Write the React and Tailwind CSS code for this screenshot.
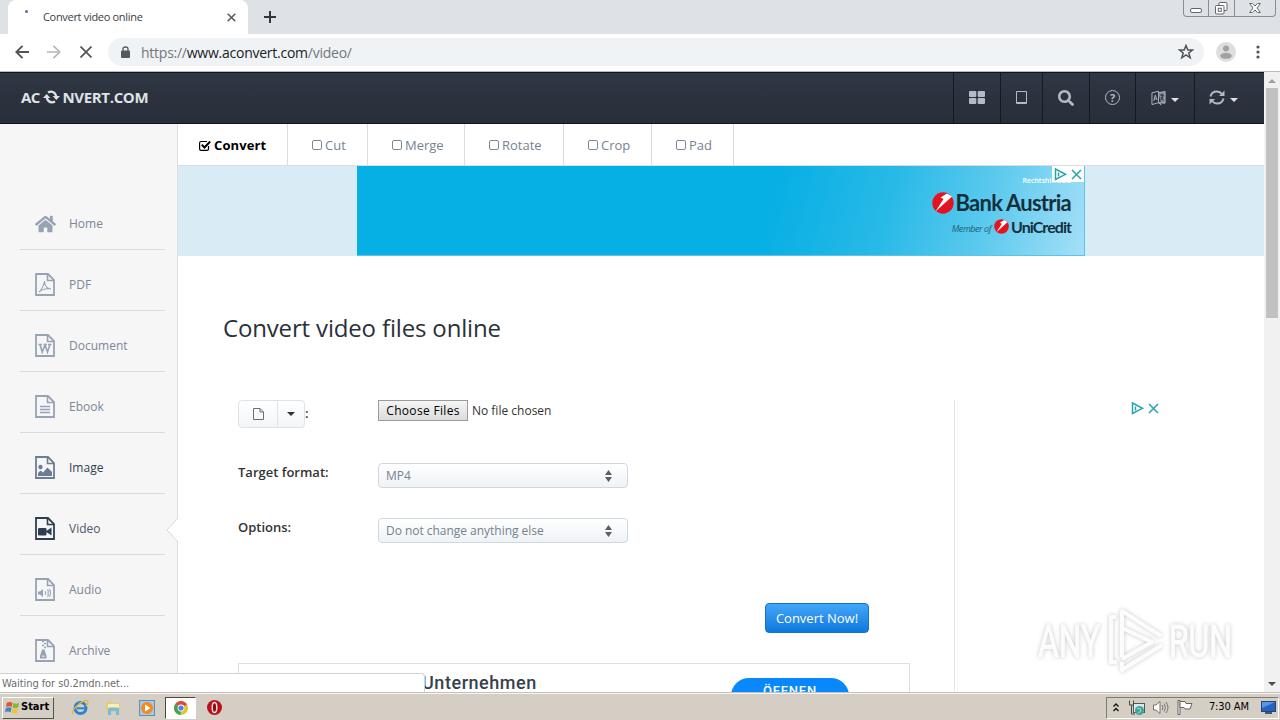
import React from "react";
import { FaHome, FaSearch } from "react-icons/fa";

const menu = [
  { label: "Home", type: "home" },
  { label: "PDF", type: "pdf" },
  { label: "Document", type: "doc" },
  { label: "Ebook", type: "ebook" },
  { label: "Image", type: "image", color: "text-[#6b7d96]", text: "text-[#333f50]" },
  { label: "Video", type: "video", color: "text-[#2f3d52]", text: "text-[#4c5a6b]" },
  { label: "Audio", type: "audio" },
  { label: "Archive", type: "archive" },
];

const tabs = [
  { label: "Cut", width: "w-20" },
  { label: "Merge", width: "w-[97px]" },
  { label: "Rotate", width: "w-[99px]" },
  { label: "Crop", width: "w-[88px]" },
  { label: "Pad", width: "w-[82px]" },
];

const FileIcon = ({ type }) => (
  <svg width="20" height="23" viewBox="0 0 20 23" fill="none" stroke="currentColor" strokeWidth="1.8">
    <path d="M1 1H13L19 7V22H1Z" />
    <path d="M12.5 1V7.5H19" strokeWidth="1.6" />
    {type === "pdf" && (
      <path d="M4 19C6 18 9 12 9.500 8C9 13 13 16 16 16C13 15 7 16 4 19Z" strokeWidth="1.1" />
    )}
    {type === "doc" && (
      <path d="M3.500 10.500H7M8.500 10.500H12M13 10.500H16.500M5 10.500L7.200 18L10 11L12.500 18L15 10.500" strokeWidth="1.600" />
    )}
    {type === "ebook" && <path d="M5 11.500H15M5 14.500H15M5 17.500H15" strokeWidth="1.400" />}
    {type === "image" && (
      <g fill="currentColor" stroke="none">
        <circle cx="5.500" cy="11" r="2.200" />
        <path d="M3 20V17L5.500 14.500L8 16.500L12.500 11.500L17 16V20Z" />
      </g>
    )}
    {type === "video" && (
      <g fill="currentColor" stroke="none">
        <rect x="3" y="11" width="8.500" height="7.500" rx="1.2" />
        <path d="M10.500 14.500L16.500 10.500V18.500Z" />
      </g>
    )}
    {type === "audio" && (
      <g>
        <path d="M3 13.500H5L8 11V19L5 16.500H3Z" fill="currentColor" stroke="none" />
        <path d="M10 13Q11.500 15 10 17M12.500 11.500Q14 13 13 15Q14 17 12.500 18.500M14.500 11Q16.500 15 14.500 19" strokeWidth="1.100" />
      </g>
    )}
    {type === "archive" && (
      <g>
        <path d="M7 2.500H9M9 4.500H11M7 6.500H9M9 8.500H11" strokeWidth="1.500" />
        <path d="M7 10.500H9.500L11.500 17V19.500H5V17Z" fill="currentColor" stroke="none" />
        <path d="M7 17.200H9.500" stroke="#f6f6f6" strokeWidth="1" />
      </g>
    )}
  </svg>
);

const Caret = ({ className }) => (
  <svg className={className} width="8" height="4" viewBox="0 0 8 4" fill="currentColor">
    <path d="M0 0H8L4 4Z" />
  </svg>
);

const Swoosh = ({ size }) => (
  <svg width={size} height={size} viewBox="0 0 22 22" className="shrink-0">
    <circle cx="11" cy="11" r="10.700" fill="#e4131f" />
    <path d="M3.500 19.500L11.500 7L8.500 5.500L15 1.500L20 4.500Z" fill="#fff" />
  </svg>
);

const AdChoices = () => (
  <svg width="30" height="14" viewBox="0 0 30 14" fill="none" stroke="#27a3b0" strokeWidth="1.500">
    <path d="M2.500 2V12.500L12.500 7.300Z" />
    <path d="M5.500 5.500V9.500" />
    <path d="M19 3L28 12M28 3L19 12" />
  </svg>
);

const BrowserChrome = () => (
  <div className="shrink-0 h-[72px] bg-white">
    <div className="h-[34px] bg-[#dee1e6] flex items-start pl-2">
      <div className="w-60 h-full bg-white rounded-t-lg flex items-center pl-[17px] pr-3">
        <span className="w-[3px] h-[3px] rounded-full bg-[#5470a8] mb-[12px]" />
        <span className="ml-[15px] grow text-[11px] text-[#3a3d41] tracking-[-0.310px]">Convert video online</span>
        <svg width="9" height="9" viewBox="0 0 9 9" stroke="#55585c" strokeWidth="1.500">
          <path d="M0.700 0.700L8.300 8.300M8.300 0.700L0.700 8.300" />
        </svg>
      </div>
      <svg className="mt-[11px] ml-4" width="12" height="12" viewBox="0 0 12 12" stroke="#33363a" strokeWidth="2">
        <path d="M6 0V12M0 6H12" />
      </svg>
      <div className="ml-auto mr-[4px] h-[17px] w-[93px] flex border border-t-0 border-[#898d96] rounded-b-[4px] text-[#6b6f78]">
        <div className="w-[25px] border-r border-[#898d96] flex items-end justify-center pb-[3px]">
          <span className="w-[12px] h-[5px] border border-[#63666e] rounded-xs bg-white" />
        </div>
        <div className="w-[26px] border-r border-[#898d96] flex justify-center pt-[2px]">
          <svg width="13" height="13" viewBox="0 0 13 13" fill="#fff" stroke="#63666e">
            <rect x="4" y="0.500" width="8" height="8" rx="1" />
            <rect x="0.500" y="3.500" width="8.500" height="8.500" rx="1" />
            <rect x="3.300" y="6.300" width="3" height="3" />
          </svg>
        </div>
        <div className="grow flex justify-center pt-[3px]">
          <svg width="12" height="10" viewBox="0 0 12 10" fill="#fff" stroke="#63666e">
            <path d="M0.700 0.500H3.500L6 3L8.500 0.500H11.300L8 5L11.300 9.500H8.500L6 7L3.500 9.500H0.700L4 5Z" />
          </svg>
        </div>
      </div>
    </div>
    <div className="h-[37px] flex items-center pl-[15px] pr-5 pb-px">
      <svg width="14" height="14" viewBox="0 0 14 14" fill="none" stroke="#505357" strokeWidth="1.900">
        <path d="M14 7H1.500M7.500 0.800L1.300 7L7.500 13.200" />
      </svg>
      <svg className="ml-[18px]" width="14" height="14" viewBox="0 0 14 14" fill="none" stroke="#b5b7ba" strokeWidth="1.700">
        <path d="M0 7H12.500M6.500 0.800L12.700 7L6.500 13.200" />
      </svg>
      <svg className="ml-[19px]" width="12" height="12" viewBox="0 0 12 12" stroke="#505357" strokeWidth="1.700">
        <path d="M0.500 0.500L11.500 11.500M11.500 0.500L0.500 11.500" />
      </svg>
      <div className="ml-4 h-7 grow bg-[#f0f3f5] rounded-full flex items-center pl-[13px] pr-[10px]">
        <svg width="9" height="12" viewBox="0 0 9 12">
          <rect x="0" y="4.500" width="9" height="7.500" rx="1" fill="#55585c" />
          <path d="M2 5V3Q2 1 4.500 1Q7 1 7 3V5" fill="none" stroke="#55585c" strokeWidth="1.300" />
        </svg>
        <span className="ml-[11px] grow text-[14px] text-[#74777b] tracking-[-0.250px]">
          https://<span className="text-[#202124]">www.aconvert.com</span>/video/
        </span>
        <svg width="16" height="16" viewBox="0 0 16 16" fill="none" stroke="#505357" strokeWidth="1.500">
          <path d="M8 1.500L9.800 6H14.500L10.800 9L12.200 13.800L8 11L3.800 13.800L5.200 9L1.500 6H6.200Z" />
        </svg>
      </div>
      <svg className="ml-3" width="20" height="20" viewBox="0 0 20 20">
        <circle cx="10" cy="10" r="10" fill="#dedede" />
        <circle cx="10" cy="6.500" r="3" fill="#a2a2a2" />
        <ellipse cx="10" cy="13.800" rx="5.800" ry="3" fill="#a2a2a2" />
      </svg>
      <svg className="ml-[20px]" width="4" height="14" viewBox="0 0 4 14" fill="#505357">
        <circle cx="2" cy="2" r="1.600" />
        <circle cx="2" cy="7" r="1.600" />
        <circle cx="2" cy="12" r="1.600" />
      </svg>
    </div>
    <div className="h-px bg-[#b9bbbd]" />
  </div>
);

const Header = () => (
  <header className="h-[52px] shrink-0 bg-linear-to-b from-[#2f3744] to-[#282e39] border-y border-[#10151d] flex items-stretch text-[#b3bac5]">
    <div className="grow flex items-center pl-[21px] pb-[2px] text-[15px] font-bold text-[#dfe2e6]">
      <span className="tracking-[-0.700px]">AC</span>
      <svg className="mx-[3px]" width="17" height="14" viewBox="0 0 17 14" fill="none" stroke="currentColor" strokeWidth="2.300">
        <path d="M5 2.500Q8.500 0.500 11.500 3Q13 4.500 13.300 7M12 11.500Q8.500 13.500 5.500 11Q4 9.500 3.700 7" />
        <path d="M9.700 6H17L13.300 10ZM7.300 8H0L3.700 4Z" fill="currentColor" stroke="none" />
      </svg>
      <span className="tracking-[-0.350px]">NVERT.COM</span>
    </div>
    <div className="w-[47px] border-l border-[#141a24] flex items-center justify-center pb-[2px]">
      <svg width="16" height="13" viewBox="0 0 16 13" fill="currentColor">
        <rect width="7.300" height="6" rx="1" />
        <rect x="8.700" width="7.300" height="6" rx="1" />
        <rect y="7" width="7.300" height="6" rx="1" />
        <rect x="8.700" y="7" width="7.300" height="6" rx="1" />
      </svg>
    </div>
    <div className="w-[42px] border-l border-[#141a24] flex items-center justify-center pb-[2px]">
      <span className="w-[11px] h-[13px] border border-b-2 border-[#b3bac5] rounded-[1px] -ml-px" />
    </div>
    <div className="w-[47px] border-l border-[#141a24] flex items-center justify-center pb-[1px]">
      <FaSearch className="text-[16px]" />
    </div>
    <div className="w-[46px] border-l border-[#141a24] flex items-center justify-center pb-[2px]">
      <span className="w-[15px] h-[15px] rounded-full border border-[#b3bac5] flex items-center justify-center text-[11px] font-bold leading-none">
        ?
      </span>
    </div>
    <div className="w-[59px] border-l border-[#141a24] flex items-center pl-[15px] pb-[1px]">
      <svg width="15" height="16" viewBox="0 0 16 16" fill="none" stroke="currentColor">
        <path d="M1 2.500L8 0.800V13L1 15Z" />
        <path d="M8 2.500L15 1V13.500L8 13L11 15.500" fill="#7f8896" />
        <path d="M3 11L4.500 5L6.500 10M3.500 9H6" />
        <path d="M10 5H13.500M11.500 3.500V5M13 5Q12 9 9.800 10.500M10.500 7L13.500 10.500" stroke="#252b35" />
      </svg>
      <Caret className="ml-[5px] mt-1 text-[#dfe2e6]" />
    </div>
    <div className="w-[70px] border-l border-[#141a24] flex items-center pl-[14px] pb-[1px]">
      <svg width="16" height="15" viewBox="0 0 16 15" fill="none" stroke="currentColor" strokeWidth="1.900">
        <path d="M1.500 6.500Q2.500 1.500 8 1.500Q11 1.500 13.500 4.500M14.500 8.500Q13.500 13.500 8 13.500Q5 13.500 2.500 10.500" />
        <path d="M15.500 0.500V6H10ZM0.500 14.500V9H6Z" fill="currentColor" stroke="none" />
      </svg>
      <Caret className="ml-[5px] mt-1 text-[#dfe2e6]" />
    </div>
  </header>
);

const Sidebar = () => (
  <aside className="w-[178px] shrink-0 bg-[#f6f6f6] border-r border-[#dcdee0] pt-[65px] pl-5 pr-3 relative">
    {menu.map((item) => (
      <div key={item.label} className="h-[61px] pt-[9px] border-b border-[#d9dadc] flex items-center">
        <span className={`w-[34px] pl-[15px] shrink-0 ${item.color || "text-[#97a3b4]"}`}>
          {item.type === "home" ? <FaHome className="w-[21px] h-[20px]" /> : <FileIcon type={item.type} />}
        </span>
        <span className={`ml-[15px] text-[12px] ${item.text || "text-[#7c8797]"}`}>{item.label}</span>
      </div>
    ))}
    {/* active item pointer */}
    <svg className="absolute right-[-1px] top-[394px]" width="12" height="24" viewBox="0 0 12 24">
      <path d="M12 0.500L1 12L12 23.500Z" fill="#fff" />
      <path d="M11.500 0.500L1 12L11.500 23.500" fill="none" stroke="#d8dadc" />
    </svg>
  </aside>
);

const Select = ({ value }) => (
  <div className="w-[250px] h-[25px] border border-[#d0d7de] rounded-[4px] bg-linear-to-b from-white to-[#eff3f6] flex items-center pl-[7px] pr-[15px] text-[12px] text-[#76818c]">
    <span className="grow tracking-[-0.030px]">{value}</span>
    <svg width="7" height="12" viewBox="0 0 7 12" fill="#5c5f63">
      <path d="M0 5L3.500 0L7 5ZM0 7L3.500 12L7 7Z" />
    </svg>
  </div>
);

const Banner = () => (
  <div className="h-[90px] shrink-0 bg-[#d9ebf5] pl-[179px]">
    <div className="w-[728px] h-[90px] bg-[linear-gradient(105deg,#06afe4_56%,#28b9e7_72%,#5dcaee_86%,#a5dff7_100%)] border-r border-b border-[#5cc4e4] relative flex flex-col items-end pr-[13px]">
      <span className="mt-[10px] h-[9px] leading-[9px] text-[7px] font-semibold text-white">Rechtshinweis</span>
      <div className="mt-[5px] h-[25px] flex items-center">
        <Swoosh size={22} />
        <span className="ml-[2px] text-[22px] leading-[25px] font-bold text-[#14303d] tracking-[-0.750px] font-['Lato',sans-serif]">
          Bank Austria
        </span>
      </div>
      <div className="mt-[2px] h-[19px] flex items-center">
        <span className="text-[9px] italic text-[#1f5e78] tracking-[-0.450px] mt-1">Member of</span>
        <span className="ml-[3px]">
          <Swoosh size={15} />
        </span>
        <span className="ml-[2px] text-[16px] leading-[19px] font-bold text-[#14303d] tracking-[-0.950px] font-['Lato',sans-serif]">
          UniCredit
        </span>
      </div>
      <div className="absolute top-0 right-0 bg-white h-[16px] w-[32px] flex items-center justify-center">
        <AdChoices />
      </div>
    </div>
  </div>
);

const Watermark = () => (
  <svg
    className="absolute left-[1030px] top-[600px] drop-shadow-[0_0_2px_rgba(0,0,0,0.22)]"
    width="220"
    height="80"
    viewBox="0 0 220 80"
    fill="none"
  >
    <text x="8" y="57" fontSize="44" fontFamily="Roboto, sans-serif" fill="#fcfcfc" stroke="#fcfcfc" textLength="62" lengthAdjust="spacingAndGlyphs">
      ANY
    </text>
    <text x="139" y="57" fontSize="44" fontFamily="Roboto, sans-serif" fill="#fcfcfc" stroke="#fcfcfc" textLength="63" lengthAdjust="spacingAndGlyphs">
      RUN
    </text>
    <g stroke="#fcfcfc" strokeWidth="4" strokeLinejoin="round">
      <path d="M92 57V11L131 36M92 28L122 42L92 59" />
      <path d="M86 17H81V62H87M92 62V70L132 45" />
    </g>
  </svg>
);

const Taskbar = () => (
  <footer className="h-7 shrink-0 bg-[#d5cec5] border-t border-[#c6c0b8] shadow-[inset_0_1px_0_#f8f6f3] flex items-center pt-[2px] pl-[2px] pr-px font-['DejaVu_Sans_Condensed','Open_Sans',sans-serif]">
    <div className="w-[52px] h-[22px] bg-[#d5cec5] border border-t-white border-l-white border-r-[#55514b] border-b-[#55514b] flex items-center pl-[2px]">
      <svg width="15" height="15" viewBox="0 0 16 16" className="shrink-0">
        <path d="M2 3Q5 1 8 3L7 7.500Q4 6 1 7.500Z" fill="#e5532a" />
        <path d="M9 3Q12 5 15 3L14 8Q11 9.500 8 8Z" fill="#7db942" />
        <path d="M1 8.500Q4 7 7 8.500L6 13Q3 11.500 0 13Z" fill="#3d86cf" />
        <path d="M8 9Q11 10.500 14 9L13 13.500Q10 15 7 13.500Z" fill="#f5c12d" />
      </svg>
      <span className="ml-px text-[11px] font-bold text-black">Start</span>
    </div>
    <svg className="ml-[18px]" width="17" height="17" viewBox="0 0 17 17" fill="none">
      <circle cx="8.500" cy="9" r="5.500" stroke="#2e83cf" strokeWidth="3" />
      <path d="M5 9.300H14" stroke="#2e83cf" strokeWidth="2" />
      <path d="M1 15Q-1 12 6 6Q13 0 15.500 2Q17 3.500 14 7" stroke="#e6b73a" strokeWidth="1.300" />
    </svg>
    <svg className="ml-[16px]" width="17" height="16" viewBox="0 0 17 16">
      <path d="M1 2H6L7 3.500H15V12H1Z" fill="#e8cb6b" />
      <rect x="3" y="4" width="11" height="4" fill="#f8efb7" />
      <path d="M3 15V9Q3 7.500 5 7.500H12Q14 7.500 14 9V15H11V11H6V15Z" fill="#79bbdf" />
    </svg>
    <svg className="ml-[17px]" width="16" height="16" viewBox="0 0 16 16">
      <rect x="0.500" y="0.500" width="15" height="15" fill="#a7c9e6" stroke="#5d8fba" />
      <circle cx="8" cy="8" r="6" fill="#f28a1c" />
      <path d="M6 4.500L11.500 8L6 11.500Z" fill="#fff" />
    </svg>
    <div className="ml-[10px] w-[31px] h-[22px] bg-white border border-t-[#4b4741] border-l-[#4b4741] border-r-white border-b-white flex items-center justify-center">
      <svg width="14" height="14" viewBox="0 0 14 14">
        <circle cx="7" cy="7" r="7" fill="#e2c32e" />
        <path d="M7 7L1 3.500A7 7 0 0 1 13 3.500Z" fill="#dc4a3c" />
        <path d="M7 7L1 3.500A7 7 0 0 0 6.500 14Z" fill="#3ea353" />
        <circle cx="7" cy="7" r="3.400" fill="#fff" />
        <circle cx="7" cy="7" r="2.600" fill="#4285e8" />
      </svg>
    </div>
    <svg className="ml-[11px]" width="15" height="15" viewBox="0 0 15 15">
      <circle cx="7.500" cy="7.500" r="7.500" fill="#b7121b" />
      <ellipse cx="7.500" cy="7.500" rx="2.300" ry="5" fill="#8a0c13" stroke="#f4dcdc" strokeWidth="1.500" />
    </svg>
    <div className="ml-auto w-[173px] h-[22px] border border-t-[#7f7a72] border-l-[#7f7a72] border-r-white border-b-white flex items-center pl-[6px] pr-[2px]">
      <svg width="6" height="9" viewBox="0 0 6 9" fill="none" stroke="#111" strokeWidth="1.300">
        <path d="M0.500 3.500L3 1L5.500 3.500M0.500 8L3 5.500L5.500 8" />
      </svg>
      <svg className="ml-[10px]" width="16" height="16" viewBox="0 0 16 16">
        <rect x="4.500" y="3.500" width="11" height="9" fill="#dbe9ee" stroke="#4a5962" />
        <circle cx="10.500" cy="10.500" r="4.500" fill="#3fa699" />
        <path d="M8 9L11 8L12 11L9 13" fill="none" stroke="#a5dcc7" />
        <path d="M0.500 0.500V5H4.500V0.500M2.500 5V14H6" fill="none" stroke="#4b4b43" />
      </svg>
      <svg className="ml-[8px]" width="16" height="15" viewBox="0 0 16 15" fill="none" stroke="#77736c">
        <path d="M0.500 5H3L7 1.500V13.500L3 10H0.500Z" fill="#fff" />
        <path d="M9 5Q11 7.500 9 10M11 3.500Q14 7.500 11 11.500M13 2Q17 7.500 13 13" />
      </svg>
      <svg className="ml-[8px]" width="16" height="15" viewBox="0 0 16 15" fill="#fff" stroke="#67635c">
        <path d="M1 0.500H3V14.500H1Z" />
        <path d="M3 1.500H8L9 3.500H15L13 9H8L7 7.500H3Z" />
      </svg>
      <span className="ml-auto text-[11px] text-black tracking-[-0.080px]">7:30 AM</span>
      <svg className="ml-[12px]" width="15" height="13" viewBox="0 0 15 13">
        <rect x="0.500" y="0.500" width="14" height="10" fill="#2563c2" stroke="#264372" />
        <path d="M1 1H14L1 7Z" fill="#5797e6" />
        <path d="M4 12H11" stroke="#48576b" strokeWidth="2" />
      </svg>
    </div>
  </footer>
);

const App = () => {
  return (
    <div className="w-[1280px] h-[720px] flex flex-col overflow-hidden relative bg-white font-['Open_Sans',sans-serif]">
      <BrowserChrome />

      <div className="h-[620px] flex overflow-hidden relative">
        <div className="w-[1264px] flex flex-col overflow-hidden">
          <Header />
          <div className="grow flex min-h-0">
            <Sidebar />
            <main className="grow flex flex-col overflow-hidden">
              {/* Tabs */}
              <nav className="h-[42px] shrink-0 flex border-b border-[#d9dde2] text-[13px] text-[#758293]">
                <div className="w-[110px] border-r border-[#d9dbe2] flex items-center pl-[21px] pt-[2px] text-black font-bold">
                  <svg className="mr-[3px]" width="12" height="11" viewBox="0 0 12 11" fill="none" stroke="currentColor">
                    <path d="M9.500 6V9Q9.500 10.400 8 10.400H2Q0.600 10.400 0.600 9V3Q0.600 1.500 2 1.500H8" strokeWidth="1.200" />
                    <path d="M2.800 4.800L5.500 7.500L11.200 1.500" strokeWidth="2" />
                  </svg>
                  <span className="tracking-[0.100px]">Convert</span>
                </div>
                {tabs.map((t) => (
                  <div key={t.label} className={`border-r border-[#d9dbe2] flex items-center pl-6 pt-[2px] ${t.width}`}>
                    <span className="w-[10px] h-[10px] border border-[#7d8897] rounded-[2px] mr-[3px] mb-px" />
                    {t.label}
                  </div>
                ))}
              </nav>

              <Banner />

              <h1 className="mt-[54px] ml-[45px] text-[24px] leading-[36px] text-[#2b303a] tracking-[-0.160px] shrink-0">
                Convert video files online
              </h1>

              <div className="mt-[54px] ml-[60px] flex grow">
                <div className="w-[672px] shrink-0 flex flex-col text-[13px] text-[#333]">
                  <div className="flex h-7">
                    <div className="w-[140px] flex items-center">
                      <div className="w-[67px] h-7 border border-[#dde3e8] rounded-[4px] bg-linear-to-b from-white to-[#f3f5f7] flex">
                        <div className="w-[39px] border-r border-[#dde3e8] flex items-center justify-center">
                          <svg width="11" height="12" viewBox="0 0 11 12" fill="none" stroke="#6c6f73">
                            <path d="M0.500 0.500H7L10.500 4V11.500H0.500ZM7 0.500V4H10.500" />
                          </svg>
                        </div>
                        <div className="grow flex items-center justify-center">
                          <Caret className="text-[#333]" />
                        </div>
                      </div>
                      <span className="font-semibold">:</span>
                    </div>
                    <div className="flex items-center h-[21px]">
                      <button className="w-[90px] h-[21px] border border-[#9b9b9b] bg-linear-to-b from-[#f5f5f5] to-[#dcdcdc] text-[12px] text-black leading-none tracking-[0.320px]">
                        Choose Files
                      </button>
                      <span className="ml-1 text-[12px]">No file chosen</span>
                    </div>
                  </div>
                  <div className="mt-[35px] flex h-[26px]">
                    <span className="w-[140px] font-semibold leading-[19px]">Target format:</span>
                    <Select value="MP4" />
                  </div>
                  <div className="mt-[29px] flex h-[26px]">
                    <span className="w-[140px] font-semibold leading-[19px]">Options:</span>
                    <Select value="Do not change anything else" />
                  </div>
                  <button className="mt-[59px] ml-[527px] w-[104px] h-[30px] pt-px shrink-0 rounded-[4px] border border-[#1873c4] bg-linear-to-b from-[#42a6f8] to-[#0878dc] text-[13px] text-white">
                    Convert Now!
                  </button>
                  <div className="mt-[30px] h-[60px] shrink-0 border border-b-0 border-[#dfdfdf] flex items-start">
                    <span className="ml-[183px] mt-[6px] w-[309px] text-[18px] leading-[26px] font-medium text-[#36414b] tracking-[0.550px] font-['Roboto',sans-serif]">
                      Unternehmen
                    </span>
                    <span className="mt-[14px] w-[118px] h-9 rounded-full bg-[#0888fc] text-white text-[13px] leading-[26px] text-center font-medium font-['Roboto',sans-serif] tracking-[0.800px]">
                      ÖFFNEN
                    </span>
                  </div>
                </div>
                <div className="ml-11 grow border-l border-[#e7e7e7] pl-[2px] flex">
                  <div className="grow border-l border-[#f8f8f8] pl-[172px] pt-[1px]">
                    <AdChoices />
                  </div>
                </div>
              </div>
            </main>
          </div>
        </div>

        {/* Scrollbar */}
        <div className="w-4 bg-[#f1f1f1] flex flex-col items-center">
          <Caret className="mt-[7px] rotate-180 text-[#a0a0a0]" />
          <div className="mt-[5px] w-3 h-[230px] bg-[#c1c1c1]" />
          <Caret className="mt-auto mb-[6px] text-[#4d4d4d]" />
        </div>

        {/* Status bubble */}
        <div className="absolute left-0 bottom-0 w-[425px] h-[19px] bg-white border-t border-r border-[#cfd1d3] rounded-tr-[4px] flex items-center pl-[2px] pt-[2px] text-[11px] text-[#6a6d70] tracking-[-0.070px] font-['DejaVu_Sans_Condensed',sans-serif]">
          Waiting for s0.2mdn.net...
        </div>
      </div>

      <Taskbar />
      <Watermark />
    </div>
  );
};

export default App;
